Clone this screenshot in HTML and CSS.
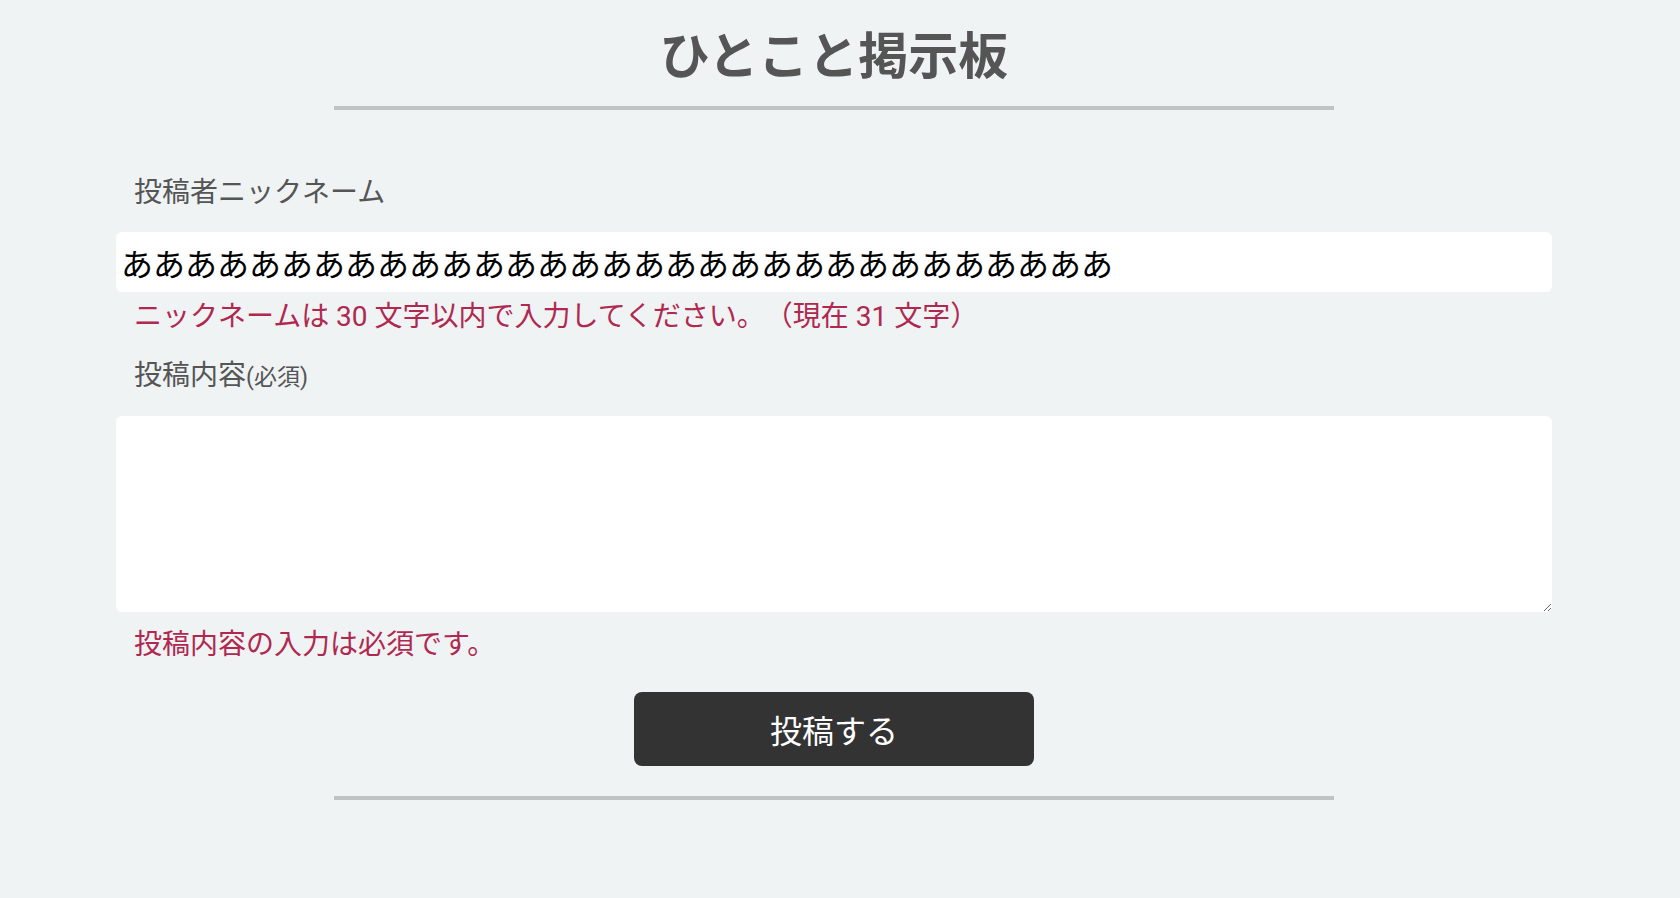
FILE: index.html
```html
<!DOCTYPE html>
<html lang="ja">
<head>
<meta charset="utf-8">
<title>ひとこと掲示板</title>
<link rel="stylesheet" href="styles.css">
</head>
<body>
<main class="board">
  <h1 class="title">ひとこと掲示板</h1>
  <hr class="rule">
  <form class="post-form">
    <label class="label label-name" for="nickname">投稿者ニックネーム</label>
    <input class="field field-input" id="nickname" type="text" value="あああああああああああああああああああああああああああああああ">
    <p class="error error-name">ニックネームは 30 文字以内で入力してください。（現在 31 文字）</p>
    <label class="label label-body" for="body">投稿内容<span class="required">(必須)</span></label>
    <textarea class="field field-area" id="body"></textarea>
    <p class="error error-body">投稿内容の入力は必須です。</p>
    <button class="submit" type="button">投稿する</button>
  </form>
  <hr class="rule rule-bottom">
</main>
</body>
</html>
```

FILE: styles.css
```css
html, body {
  margin: 0;
  padding: 0;
  background: #eff3f4;
}

body {
  font-family: Roboto, "Noto Sans CJK JP", sans-serif;
  color: #555555;
  text-spacing-trim: space-all;
}

.board {
  width: 1436px;
  margin-left: 116px;
  display: flex;
  flex-direction: column;
}

.title {
  margin: 22px 0 0;
  font-size: 50px;
  line-height: 60px;
  font-weight: 700;
  text-align: center;
  color: #555555;
  font-family: "Noto Sans CJK JP", sans-serif;
}

.rule {
  width: 1000px;
  height: 4px;
  margin: 24px auto 0;
  border: none;
  background: #bfc3c4;
}

.rule-bottom {
  margin-top: 30px;
}

.post-form {
  display: flex;
  flex-direction: column;
  margin-top: 63px;
}

.label {
  display: block;
  height: 40px;
  padding-left: 18px;
  font-size: 28px;
  line-height: 40px;
  color: #555555;
}

.required {
  font-size: 23px;
  line-height: 1;
}

.field {
  box-sizing: border-box;
  width: 100%;
  border: none;
  border-radius: 6px;
  background: #ffffff;
  color: #000000;
  font-family: Roboto, "Noto Sans CJK JP", sans-serif;
  outline: none;
}

.field-input {
  height: 60px;
  margin-top: 19px;
  padding: 0 5px;
  font-size: 32px;
}

.field-area {
  height: 196px;
  margin-top: 20px;
  padding: 6px;
  font-size: 28px;
  resize: vertical;
}

.label-body {
  margin-top: 25px;
}

.error {
  margin: 0;
  height: 28px;
  padding-left: 18px;
  font-size: 28px;
  line-height: 28px;
  color: #b0284f;
  white-space: nowrap;
}

.error-name {
  margin-top: 11px;
}

.error-body {
  margin-top: 19px;
}

.submit {
  display: block;
  width: 400px;
  height: 74px;
  margin: 33px auto 0;
  border: none;
  border-radius: 8px;
  background: #333333;
  color: #ffffff;
  font-family: Roboto, "Noto Sans CJK JP", sans-serif;
  font-size: 32px;
  cursor: pointer;
}
```
